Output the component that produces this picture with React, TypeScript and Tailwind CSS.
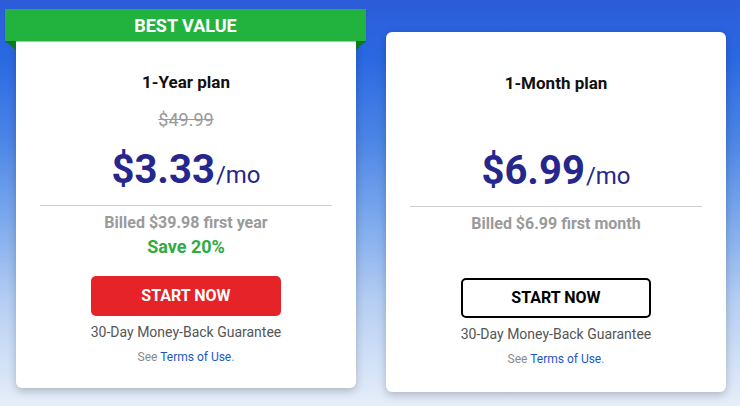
import React from "react";

function Card({
  best,
  title,
  oldPrice,
  price,
  billed,
  save,
  primary,
}: {
  best?: boolean;
  title: string;
  oldPrice?: string;
  price: string;
  billed: string;
  save?: string;
  primary?: boolean;
}) {
  return (
    <div
      className={
        "w-[340px] bg-white rounded-[6px] shadow-[0_3px_8px_rgba(0,0,0,0.22)] flex flex-col items-center " +
        (best ? "rounded-t-none pt-[29px] pb-[23px]" : "pt-[39px] pb-[25px]")
      }
    >
      <div className="text-[17px] leading-[24px] font-bold text-[#111]">{title}</div>
      <div
        className={
          "mt-[14px] text-[18px] leading-[24px] text-[#9a9a9a] line-through " +
          (oldPrice ? "" : "invisible")
        }
      >
        {oldPrice ?? "$0.00"}
      </div>
      <div className="mt-[14px] h-[48px] flex items-baseline text-[#26278c]">
        <span className="text-[40px] leading-[48px] font-bold">{price}</span>
        <span className="text-[24px] leading-[48px] ml-[1px]">/mo</span>
      </div>
      <div className="mt-[11px] w-[292px] h-px bg-[#cfcfcf]" />
      <div className="mt-[5px] text-[16px] leading-[24px] font-bold text-[#9a9a9a]">{billed}</div>
      <div
        className={
          "text-[18px] leading-[24px] font-bold text-[#2fab47] " + (save ? "" : "invisible")
        }
      >
        {save ?? "Save"}
      </div>
      {primary ? (
        <div className="mt-[17px] w-[190px] h-[40px] rounded-[5px] bg-[#e52328] text-white font-bold text-[16px] flex items-center justify-center">
          START NOW
        </div>
      ) : (
        <div className="mt-[18px] w-[190px] h-[40px] rounded-[5px] border-2 border-black text-black font-bold text-[16px] flex items-center justify-center">
          START NOW
        </div>
      )}
      <div className="mt-[6px] text-[14px] leading-[20px] text-[#555]">30-Day Money-Back Guarantee</div>
      <div className="mt-[7px] text-[12px] leading-[16px] text-[#8a8a8a]">
        See <span className="text-[#1b56c9]">Terms of Use</span>
        <span className="text-[#6b8fd6]">.</span>
      </div>
    </div>
  );
}

export default function App() {
  return (
    <div
      className="w-[740px] h-[406px] overflow-hidden flex items-start bg-[linear-gradient(180deg,#2c5cd8_0%,#2a68e2_14%,#4d86e6_35%,#7fabed_55%,#b7cff3_75%,#e6eef9_100%)]"
      style={{ fontFamily: "Roboto, 'Liberation Sans', sans-serif" }}
    >
      <div className="ml-[5px] mt-[9px] w-[361px] flex flex-col">
        <div className="relative h-[32px] bg-[#22b33f] text-white font-bold text-[18px] flex items-center justify-center shadow-[0_1px_1px_rgba(0,0,0,0.25)] z-10">
          BEST VALUE
          <svg className="absolute left-0 top-[32px]" width="11" height="9" viewBox="0 0 11 9">
            <polygon points="0,0 11,0 11,9" fill="#0a7a1f" />
          </svg>
          <svg className="absolute right-0 top-[32px]" width="10" height="9" viewBox="0 0 10 9">
            <polygon points="0,0 10,0 0,9" fill="#0a7a1f" />
          </svg>
        </div>
        <div className="mx-[11px] w-[340px]">
          <Card
            best
            title="1-Year plan"
            oldPrice="$49.99"
            price="$3.33"
            billed="Billed $39.98 first year"
            save="Save 20%"
            primary
          />
        </div>
      </div>
      <div className="ml-[20px] mt-[32px]">
        <Card title="1-Month plan" price="$6.99" billed="Billed $6.99 first month" />
      </div>
    </div>
  );
}
